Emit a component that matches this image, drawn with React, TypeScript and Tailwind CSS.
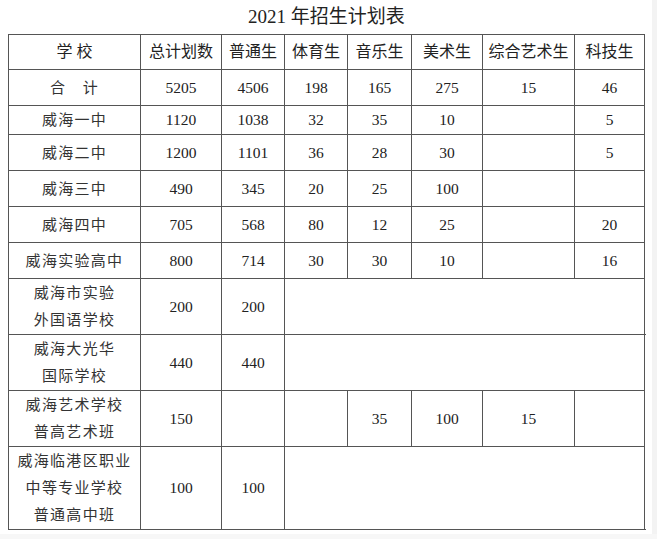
const FONT = "font-['Liberation_Serif','Noto_Sans_CJK_SC',serif]"

const HEADERS = ['总计划数', '普通生', '体育生', '音乐生', '美术生', '综合艺术生', '科技生']

type Row = { name: string[]; h: string; cells?: (string | number)[]; merged?: (string | number)[] }

const ROWS: Row[] = [
  { name: ['合\u2003计'], h: 'h-[36px]', cells: [5205, 4506, 198, 165, 275, 15, 46] },
  { name: ['威海一中'], h: 'h-[29px]', cells: [1120, 1038, 32, 35, 10, '', 5] },
  { name: ['威海二中'], h: 'h-[36px]', cells: [1200, 1101, 36, 28, 30, '', 5] },
  { name: ['威海三中'], h: 'h-[36px]', cells: [490, 345, 20, 25, 100, '', ''] },
  { name: ['威海四中'], h: 'h-[36px]', cells: [705, 568, 80, 12, 25, '', 20] },
  { name: ['威海实验高中'], h: 'h-[36px]', cells: [800, 714, 30, 30, 10, '', 16] },
  { name: ['威海市实验', '外国语学校'], h: 'h-[56px]', merged: [200, 200] },
  { name: ['威海大光华', '国际学校'], h: 'h-[56px]', merged: [440, 440] },
  { name: ['威海艺术学校', '普高艺术班'], h: 'h-[56px]', cells: [150, '', '', 35, 100, 15, ''] },
  { name: ['威海临港区职业', '中等专业学校', '普通高中班'], h: 'h-[83px]', merged: [100, 100] },
]

const cell = 'border border-[#555] text-center align-middle p-0'

export default function App() {
  return (
    <div className={`w-[657px] h-[539px] bg-white text-[#222] ${FONT} relative`}>
      <div className="w-[637px] ml-[8px] h-[34px] flex items-center justify-center text-[19px] pt-[1px]">
        2021&nbsp;年招生计划表
      </div>

      <table className="ml-[8px] w-[637px] table-fixed border-collapse">
        <colgroup>
          <col className="w-[132px]" />
          <col className="w-[81px]" />
          <col className="w-[63px]" />
          <col className="w-[63px]" />
          <col className="w-[64px]" />
          <col className="w-[71px]" />
          <col className="w-[92px]" />
          <col className="w-[70px]" />
        </colgroup>
        <thead>
          <tr className="h-[35px] text-[16px] leading-[20px]">
            <th className={`${cell} font-normal`}>学&nbsp;校</th>
            {HEADERS.map((h) => (
              <th key={h} className={`${cell} font-normal`}>
                {h}
              </th>
            ))}
          </tr>
        </thead>
        <tbody>
          {ROWS.map((r) => (
            <tr key={r.name.join('')} className={`${r.h} leading-[20px]`}>
              <td className={`${cell} text-[15px] tracking-[1.3px] text-[#333]`}>
                {r.name.map((n, i) => (
                  <div key={n} className={i > 0 ? 'mt-[7px]' : ''}>
                    {n}
                  </div>
                ))}
              </td>
              {r.cells &&
                r.cells.map((v, i) => (
                  <td key={i} className={`${cell} text-[15.5px]`}>
                    {v}
                  </td>
                ))}
              {r.merged && (
                <>
                  {r.merged.map((v, i) => (
                    <td key={i} className={`${cell} text-[15.5px]`}>
                      {v}
                    </td>
                  ))}
                  <td colSpan={6} className={cell}></td>
                </>
              )}
            </tr>
          ))}
        </tbody>
      </table>

      <div className="absolute right-0 top-0 w-[5px] h-full bg-[#f3f3f3]" />
      <div className="absolute left-0 bottom-0 w-full h-[5px] bg-[#f7f7f7]" />
    </div>
  )
}
